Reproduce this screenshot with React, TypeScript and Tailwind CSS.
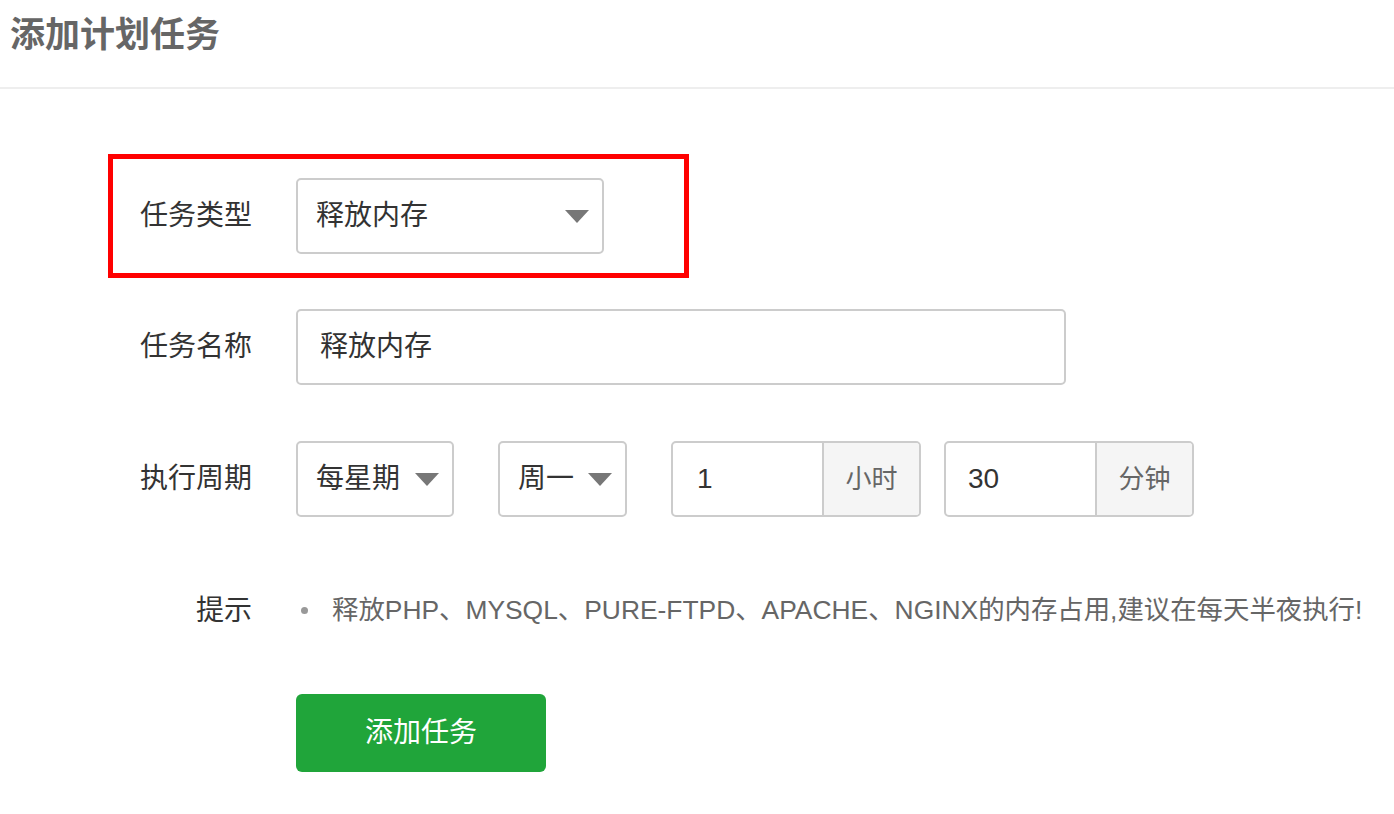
import React from 'react';

const Caret = () => (
  <svg width="24" height="13" viewBox="0 0 24 13" className="shrink-0">
    <polygon points="0,0 24,0 12,13" fill="#777777" />
  </svg>
);

const FieldLabel: React.FC<{ children: React.ReactNode }> = ({ children }) => (
  <div className="w-[158px] shrink-0 pr-[44px] text-right text-[28px] text-[#333]">{children}</div>
);

export default function App() {
  return (
    <div
      className="min-h-[814px] w-[1394px] bg-white"
      style={{ fontFamily: '"Liberation Sans", "Noto Sans CJK SC", sans-serif' }}
    >
      <div className="h-[89px] border-b-2 border-[#eeeeee] pl-[10px] pt-[12px]">
        <h1 className="text-[35px] font-bold leading-[46px] text-[#666]">添加计划任务</h1>
      </div>

      {/* 任务类型 */}
      <div className="ml-[108px] mt-[65px] flex h-[124px] w-[581px] items-center border-[5px] border-[#ff0000] pl-[25px]">
        <FieldLabel>任务类型</FieldLabel>
        <div className="flex h-[76px] w-[308px] items-center justify-between rounded-[5px] border-2 border-[#cccccc] pl-[18px] pr-[13px]">
          <span className="text-[28px] text-[#333]">释放内存</span>
          <Caret />
        </div>
      </div>

      {/* 任务名称 */}
      <div className="ml-[138px] mt-[31px] flex items-center">
        <FieldLabel>任务名称</FieldLabel>
        <div className="flex h-[76px] w-[770px] items-center rounded-[5px] border-2 border-[#cccccc] pl-[22px]">
          <span className="text-[28px] text-[#333]">释放内存</span>
        </div>
      </div>

      {/* 执行周期 */}
      <div className="ml-[138px] mt-[56px] flex items-center">
        <FieldLabel>执行周期</FieldLabel>
        <div className="flex h-[76px] w-[158px] items-center justify-between rounded-[5px] border-2 border-[#cccccc] pl-[18px] pr-[13px]">
          <span className="text-[28px] text-[#333]">每星期</span>
          <Caret />
        </div>
        <div className="ml-[44px] flex h-[76px] w-[129px] items-center justify-between rounded-[5px] border-2 border-[#cccccc] pl-[18px] pr-[13px]">
          <span className="text-[28px] text-[#333]">周一</span>
          <Caret />
        </div>
        <div className="ml-[44px] flex h-[76px] w-[250px] overflow-hidden rounded-[5px] border-2 border-[#cccccc]">
          <div className="flex flex-1 items-center pl-[24px] text-[28px] text-[#333]">1</div>
          <div className="flex w-[97px] items-center justify-center border-l-2 border-[#cccccc] bg-[#f5f5f5] text-[26px] text-[#666]">
            小时
          </div>
        </div>
        <div className="ml-[23px] flex h-[76px] w-[250px] overflow-hidden rounded-[5px] border-2 border-[#cccccc]">
          <div className="flex flex-1 items-center pl-[22px] text-[28px] text-[#333]">30</div>
          <div className="flex w-[97px] items-center justify-center border-l-2 border-[#cccccc] bg-[#f5f5f5] text-[26px] text-[#666]">
            分钟
          </div>
        </div>
      </div>

      {/* 提示 */}
      <div className="ml-[138px] mt-[73px] flex items-center">
        <FieldLabel>提示</FieldLabel>
        <ul className="flex items-center">
          <li className="flex items-center">
            <span className="ml-[5px] mr-[24px] h-[7px] w-[7px] rounded-full bg-[#999]" />
            <span className="text-[26.4px] text-[#666]">
              释放PHP、MYSQL、PURE-FTPD、APACHE、NGINX的内存占用,建议在每天半夜执行!
            </span>
          </li>
        </ul>
      </div>

      <div className="ml-[296px] mt-[62px]">
        <button className="flex h-[78px] w-[250px] items-center justify-center rounded-[6px] bg-[#20a53a] text-[28px] text-white">
          添加任务
        </button>
      </div>
    </div>
  );
}
